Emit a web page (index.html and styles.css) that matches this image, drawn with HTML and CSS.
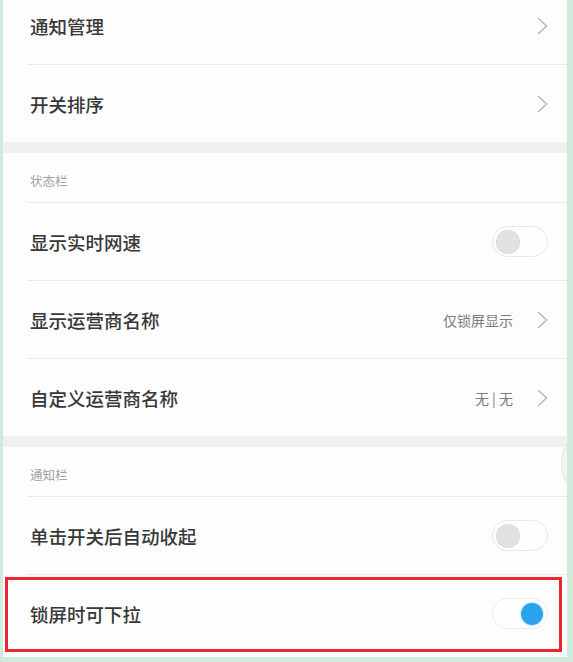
FILE: index.html
```html
<!DOCTYPE html>
<html lang="zh-CN">
<head>
<meta charset="utf-8">
<title>通知栏与状态栏</title>
<link rel="stylesheet" href="styles.css">
</head>
<body>
<div class="screen">
  <div class="group">
    <div class="row first"><span class="label">通知管理</span><span class="end"><svg class="chev" width="11" height="18" viewBox="0 0 11 18"><polyline points="1.5,1.5 9.5,9 1.5,16.5"/></svg></span></div>
    <div class="row"><span class="label">开关排序</span><span class="end"><svg class="chev" width="11" height="18" viewBox="0 0 11 18"><polyline points="1.5,1.5 9.5,9 1.5,16.5"/></svg></span></div>
  </div>
  <div class="band"></div>
  <div class="group">
    <div class="head">状态栏</div>
    <div class="row"><span class="label">显示实时网速</span><span class="end"><span class="toggle"><span class="knob"></span></span></span></div>
    <div class="row"><span class="label">显示运营商名称</span><span class="end"><span class="value">仅锁屏显示</span><svg class="chev" width="11" height="18" viewBox="0 0 11 18"><polyline points="1.5,1.5 9.5,9 1.5,16.5"/></svg></span></div>
    <div class="row"><span class="label">自定义运营商名称</span><span class="end"><span class="value">无 | 无</span><svg class="chev" width="11" height="18" viewBox="0 0 11 18"><polyline points="1.5,1.5 9.5,9 1.5,16.5"/></svg></span></div>
  </div>
  <div class="band"></div>
  <div class="group">
    <div class="head">通知栏</div>
    <div class="row"><span class="label">单击开关后自动收起</span><span class="end"><span class="toggle"><span class="knob"></span></span></span></div>
    <div class="row highlight"><span class="label">锁屏时可下拉</span><span class="end"><span class="toggle on"><span class="knob"></span></span></span></div>
  </div>
  <div class="edge-tab"></div>
</div>
</body>
</html>
```

FILE: styles.css
```css
html, body {
  margin: 0;
  padding: 0;
}
body {
  background: #d2eadb;
  font-family: "Noto Sans CJK SC", "Noto Sans", sans-serif;
  height: 662px;
  overflow: hidden;
}
.screen {
  position: relative;
  margin: 0 6px 0 3px;
  height: 657px;
  background: #fcfdfc;
  overflow: hidden;
}
.group {
  background: #fcfdfc;
}
.row {
  height: 77px;
  margin-left: 24px;
  padding: 0 19px 0 3px;
  display: flex;
  align-items: center;
  justify-content: space-between;
  border-bottom: 1px solid #e8e9e8;
}
.row:last-child {
  border-bottom: none;
}
.row.first {
  margin-top: -13px;
}
.label {
  font-size: 18.5px;
  color: #383838;
  font-weight: 500;
}
.end {
  display: flex;
  align-items: center;
}
.value {
  font-size: 14px;
  color: #7c7c7c;
  margin-right: 24px;
}
.chev {
  display: block;
}
.chev polyline {
  fill: none;
  stroke: #b4b4b4;
  stroke-width: 1.4;
  stroke-linecap: round;
  stroke-linejoin: round;
}
.band {
  height: 11px;
  background: #eff1f0;
}
.head {
  box-sizing: border-box;
  height: 50px;
  margin-left: 24px;
  padding: 5px 0 0 3px;
  display: flex;
  align-items: center;
  font-size: 12.5px;
  color: #a3a3a3;
  border-bottom: 1px solid #e8e9e8;
}
.toggle {
  box-sizing: border-box;
  width: 56px;
  height: 31px;
  border: 1.5px solid #e6e7e6;
  border-radius: 16px;
  background: #fefefe;
  display: flex;
  align-items: center;
  padding: 0 4px;
}
.knob {
  width: 22px;
  height: 22px;
  border-radius: 50%;
  background: #e1e2e1;
  box-shadow: 0 0 0 1px #d9dad9;
}
.toggle.on {
  justify-content: flex-end;
  border-color: #ebecec;
}
.toggle.on .knob {
  background: #2ba3ec;
  box-shadow: 0 0 0 1px #d3ecfa;
}
.highlight {
  position: relative;
}
.highlight::after {
  content: "";
  position: absolute;
  left: -22px;
  right: 5px;
  top: 2px;
  bottom: 0;
  border: 3px solid #ea2630;
}
.edge-tab {
  position: absolute;
  right: -30px;
  top: 437px;
  width: 34px;
  height: 52px;
  border-radius: 50%;
  border: 1px solid #e2e4e3;
  background: #f3f5f4;
}
```
